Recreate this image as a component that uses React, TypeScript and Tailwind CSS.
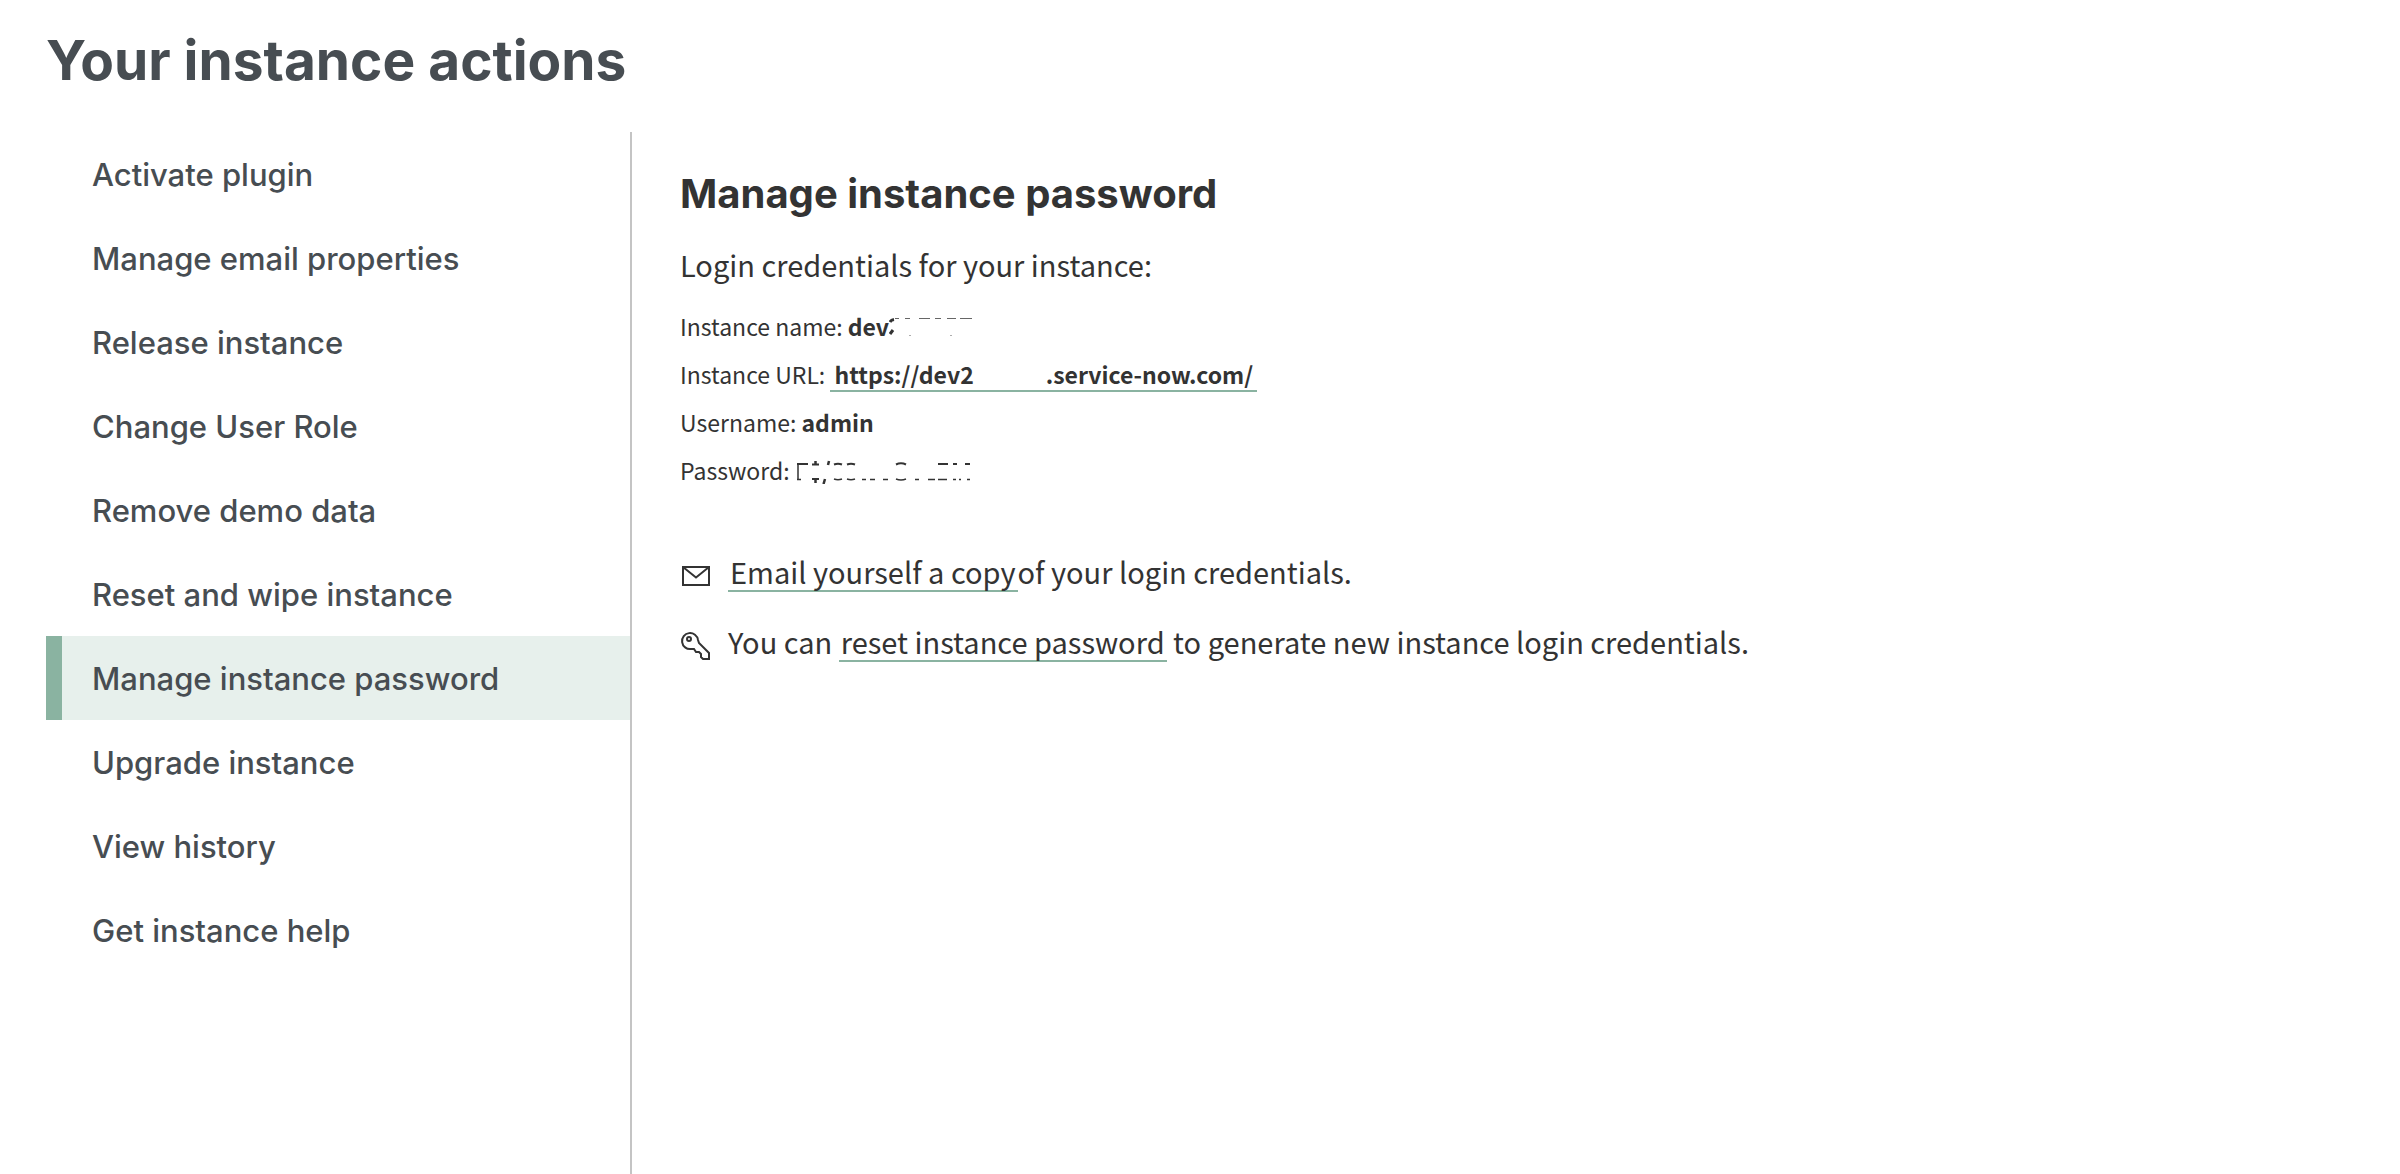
const items = [
  'Activate plugin',
  'Manage email properties',
  'Release instance',
  'Change User Role',
  'Remove demo data',
  'Reset and wipe instance',
  'Manage instance password',
  'Upgrade instance',
  'View history',
  'Get instance help',
];
const active = 'Manage instance password';

function MailIcon() {
  return (
    <svg className="mt-3 h-8 w-8 shrink-0" viewBox="0 0 32 32" fill="none" stroke="#333" strokeWidth="2" aria-hidden="true">
      <path d="M3 8H29V26H3ZM3 8L16 18.500L29 8" />
    </svg>
  );
}

function KeyIcon() {
  return (
    <svg className="mt-3 h-8 w-8 shrink-0" viewBox="0 0 32 32" fill="none" stroke="#333" strokeWidth="2" aria-hidden="true">
      <path d="M18 11L19 14L29 24V30H23L21 28V25L19 23H16L14 20H11A8 8 0 1 1 18 11Z" />
      <circle cx="9" cy="10" r="2" />
    </svg>
  );
}

/* Remnants left at the edges of the redacted instance number. */
function RedactedName() {
  return (
    <svg className="inline-block h-[18px] w-[84px] align-baseline" viewBox="-1 0 84 18" fill="none" stroke="#333" aria-hidden="true">
      <path strokeWidth="3" d="M0 4Q1 2 4 1.500M0 16L3 12" />
      <path strokeWidth="1" opacity=".75" d="M5 .5H9M15 .5H20M29 .5H40M45 .5H51M57 .5H66M70 .5H82" />
      <path strokeWidth="1" opacity=".4" d="M19 17.500H21M60 17.500H62" />
    </svg>
  );
}

/* Remnants left above and below the redacted password. */
function RedactedPassword() {
  return (
    <svg className="-mb-1 ml-0.5 inline-block h-[24px] w-[174px] align-baseline" viewBox="0 0 174 24" fill="none" stroke="#333" aria-hidden="true">
      <path strokeWidth="1.500" d="M1 19.500V4M0 19.500H4" />
      <path strokeWidth="2" d="M0 4H11M15 4.500H22M15 19H22M37 4.500Q41 3 45 4.500M50 4.500Q54 3 58 4.500M99 4.500Q104 2 109 4.500M141 4H151M156 4H160M168 4H173" />
      <path strokeWidth="2.500" d="M18.500 1V5M18.500 19V23M32 1L31 5M28 19L26.500 24" />
      <path strokeWidth="1.500" d="M37 19Q41 20.500 45 19M50 19Q54 20.500 58 19M65 19.500H69M73 19.500H78M86 19.500H91M99 19Q104 21 109 19M118 19.500H122M131 19.500H138M141 19.500H150M156 19.500H159M162 19.500H164M170 19.500H173" />
    </svg>
  );
}

export default function App() {
  return (
    <div className="flex min-h-screen flex-col bg-white pl-[46px] font-['Noto_Sans_CJK_SC',sans-serif] text-[#333]">
      <h1 className="pt-6 pb-9 font-['Inter',sans-serif] text-[55px] leading-[72px] font-bold text-[#474d52]">Your instance actions</h1>
      <div className="flex grow">
        <nav className="w-[586px] shrink-0 border-r-2 border-[#c4c4c4]">
          <ul>
            {items.map((t) => (
              <li key={t}>
                <a
                  href="#"
                  aria-current={t === active ? 'page' : undefined}
                  className={
                    t === active
                      ? "block border-l-[16px] border-[#8ab3a1] bg-[#e7f0ec] pt-0.5 pl-[30px] font-['Inter',sans-serif] text-[31px] leading-[82px] font-medium text-[#474d52]"
                      : "block border-l-[16px] border-transparent pt-0.5 pl-[30px] font-['Inter',sans-serif] text-[31px] leading-[82px] font-medium text-[#474d52]"
                  }
                >
                  {t}
                </a>
              </li>
            ))}
          </ul>
        </nav>
        <main className="min-w-0 grow px-12 pt-9">
          <h2 className="font-['Inter',sans-serif] text-[40px] leading-[52px] font-bold">Manage instance password</h2>
          <p className="mt-5 text-[29px] leading-[48px]">Login credentials for your instance:</p>
          <div className="mt-[14px] text-[23px]">
            <p className="h-12 leading-[48px]">Instance name: <b>dev</b><RedactedName /></p>
            <p className="h-12 leading-[48px]">Instance URL: <a href="#" className="inline-block border-b-2 border-[#8ab3a1] px-1 leading-[32px] font-bold">https://dev2<span className="inline-block w-[72px]" />.service-now.com/</a></p>
            <p className="h-12 leading-[48px]">Username: <b>admin</b></p>
            <p className="h-12 leading-[48px]">Password: <RedactedPassword /></p>
          </div>
          <div className="mt-[53px] flex flex-col gap-[22px] text-[29px] leading-[48px]">
            <p className="flex h-12 gap-4"><MailIcon /><span><a href="#" className="inline-block border-b-2 border-[#8ab3a1] px-0.5 leading-[38px]">Email yourself a copy</a>of your login credentials.</span></p>
            <p className="flex h-12 gap-4"><KeyIcon /><span>You can <a href="#" className="inline-block border-b-2 border-[#8ab3a1] px-0.5 leading-[38px]">reset instance password</a> to generate new instance login credentials.</span></p>
          </div>
        </main>
      </div>
    </div>
  );
}
